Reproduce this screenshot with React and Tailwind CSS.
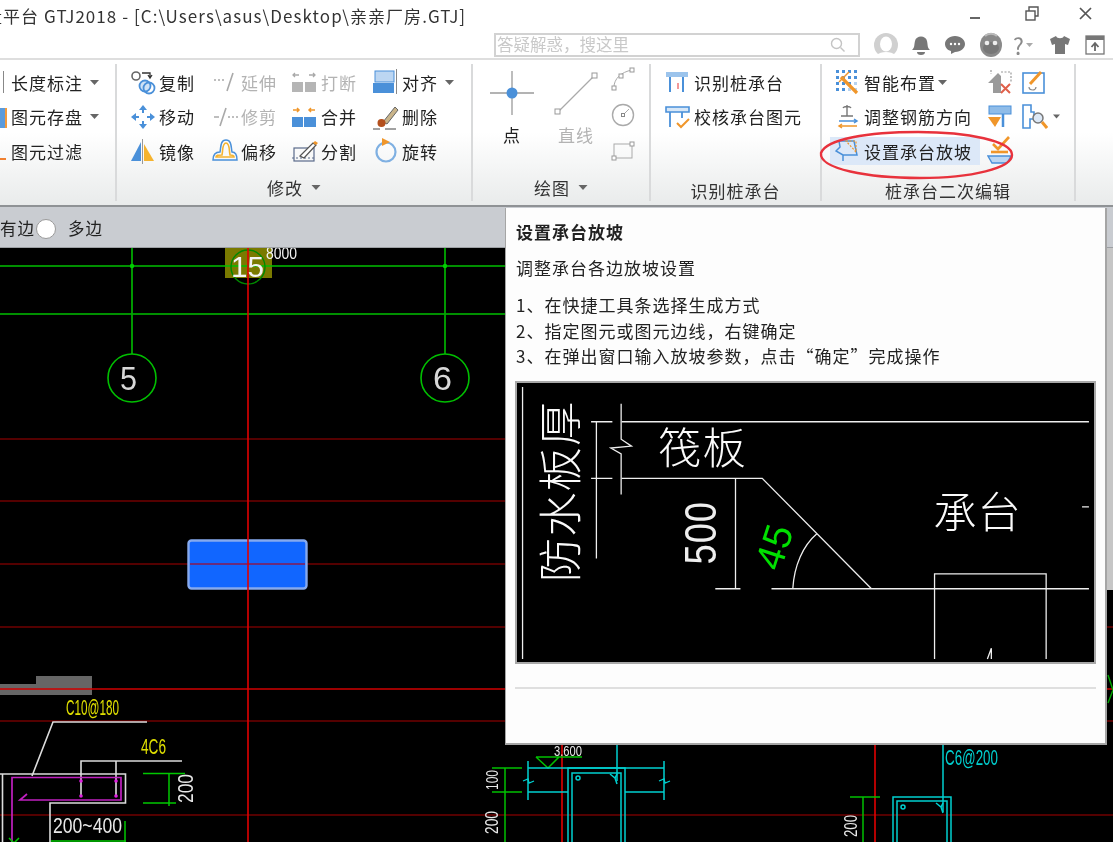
import { Fragment } from "react";

const BLUE = "#4a90d9";
const ORANGE = "#f0962a";
const GRAY = "#a9a9a9";

function Ico({ w = 26, h = 26, children, className = "" }) {
  return (
    <svg width={w} height={h} viewBox={`0 0 ${w} ${h}`} fill="none" className={`shrink-0 ${className}`}>
      {children}
    </svg>
  );
}

function Caret({ className = "" }) {
  return (
    <svg width="9" height="5" viewBox="0 0 9 5" className={`shrink-0 ${className}`}>
      <polygon points="0,0 9,0 4.5,5" fill="#666" />
    </svg>
  );
}

// ribbon icons
const IconCopy = () => (
  <Ico>
    <circle cx="6" cy="7" r="4" stroke="#666" strokeWidth="1.6" />
    <path d="M12 4h8v4M18 6l2 3 2-3" stroke="#333" strokeWidth="1.3" />
    <circle cx="15" cy="17" r="5.5" stroke={BLUE} strokeWidth="1.8" fill="#cfe2f6" />
    <circle cx="19" cy="19" r="5.5" stroke={BLUE} strokeWidth="1.8" />
  </Ico>
);
const IconMove = () => (
  <Ico>
    <g fill={BLUE}>
      <polygon points="13,1 17,6 9,6" />
      <polygon points="13,25 17,20 9,20" />
      <polygon points="1,13 6,9 6,17" />
      <polygon points="25,13 20,9 20,17" />
    </g>
    <path d="M13 6v3M13 17v3M6 13h3M17 13h3" stroke={BLUE} strokeWidth="2" />
  </Ico>
);
const IconMirror = () => (
  <Ico>
    <polygon points="11,4 11,23 1,23" fill={BLUE} />
    <polygon points="14,6 14,23 24,23" fill="#f5b32e" />
    <path d="M12.5 1v25" stroke="#999" strokeWidth="1" />
  </Ico>
);
const IconExtend = () => (
  <Ico>
    <path d="M2 11h2M6 11h2M10 11h2" stroke={GRAY} strokeWidth="1.5" />
    <path d="M21 4l-6 18" stroke={GRAY} strokeWidth="1.6" />
  </Ico>
);
const IconTrim = () => (
  <Ico>
    <path d="M2 13h5M16 13h2M20 13h2M24 13h2" stroke={GRAY} strokeWidth="1.5" />
    <path d="M14 4l-6 18" stroke={GRAY} strokeWidth="1.6" />
  </Ico>
);
const IconOffset = () => (
  <Ico>
    <path d="M1 22c0-6 3-8 7-8 1-4 0-12 6-12s5 8 6 12c3 0 5 3 5 8z" stroke={BLUE} strokeWidth="1.5" />
    <path d="M4 19c0-2 2-2 6-2 1-4 0-12 4-12s3 8 4 12c2 0 4 0 4 2z" stroke="#f5b32e" strokeWidth="1.6" />
  </Ico>
);
const IconBreak = () => (
  <Ico>
    <path d="M1 6h6M3 4l-2 2 2 2M17 6h6M21 4l2 2-2 2" stroke={GRAY} strokeWidth="1.3" />
    <rect x="0" y="13" width="11" height="10" fill="#b5b5b5" />
    <rect x="13" y="13" width="11" height="10" fill="#b5b5b5" />
  </Ico>
);
const IconMerge = () => (
  <Ico>
    <path d="M1 6h6M5 4l2 2-2 2M17 6h6M19 4l-2 2 2 2" stroke={ORANGE} strokeWidth="1.5" />
    <rect x="0" y="13" width="11" height="10" fill={BLUE} />
    <rect x="12" y="13" width="12" height="10" fill={BLUE} />
  </Ico>
);
const IconSplit = () => (
  <Ico>
    <rect x="2" y="10" width="20" height="13" stroke="#5a6a8a" strokeWidth="1.2" />
    <path d="M0 20h24" stroke="#5a6a8a" strokeWidth="1" strokeDasharray="2 2" />
    <path d="M8 18L21 5l3 2-12 13z" fill="#fff" stroke="#555" strokeWidth="1.2" />
    <path d="M21 5l2-2 3 2-2 2z" fill={ORANGE} />
  </Ico>
);
const IconAlign = () => (
  <Ico>
    <rect x="2" y="2" width="19" height="11" fill="#bcd6f2" stroke={BLUE} />
    <rect x="0" y="14" width="21" height="10" fill={BLUE} />
    <path d="M23.5 0v25" stroke="#888" strokeWidth="1" />
  </Ico>
);
const IconErase = () => (
  <Ico>
    <path d="M10 18L22 3l3 3-11 14z" fill="#c9b48a" stroke="#666" />
    <circle cx="8.5" cy="19" r="4" fill="#b4501e" />
    <path d="M0 25h7M12 25h11" stroke="#444" strokeWidth="1" />
  </Ico>
);
const IconRotate = () => (
  <Ico>
    <circle cx="13" cy="14" r="9.5" stroke="#7fb0e2" strokeWidth="2.2" />
    <polygon points="9,0 17,4 9,8" fill={ORANGE} />
  </Ico>
);

const IconIdentify = () => (
  <Ico>
    <rect x="1" y="3" width="22" height="5" fill="#9cc4ec" />
    <path d="M5 8v15M18 8v15" stroke={BLUE} strokeWidth="2" />
    <path d="M13 14v6" stroke="#e77" strokeWidth="1.5" />
  </Ico>
);
const IconCheckCap = () => (
  <Ico>
    <path d="M1 3h23v5H1z" stroke={BLUE} strokeWidth="1.6" fill="#d7e7f7" />
    <path d="M5 8v15M17 8v6" stroke={BLUE} strokeWidth="1.8" />
    <path d="M12 19l4 4 8-8" stroke={ORANGE} strokeWidth="2" />
  </Ico>
);
const IconSmart = () => (
  <Ico>
    <g fill={BLUE}>
      {[1, 7, 13, 19].flatMap((x) =>
        [1, 7, 13, 19].map((y) => <rect key={`${x}-${y}`} x={x} y={y} width="3" height="3" opacity={x + y > 30 ? 0.4 : 1} />)
      )}
    </g>
    <path d="M6 8l16 16" stroke={ORANGE} strokeWidth="3.2" />
    <path d="M4 13L14 3" stroke={ORANGE} strokeWidth="1.5" />
  </Ico>
);
const IconRebarDir = () => (
  <Ico>
    <path d="M12 1v11M8 4c1-2 7-2 8 0M6 12h12" stroke="#777" strokeWidth="1.4" />
    <path d="M4 17h18M19 15l3 2-3 2" stroke={BLUE} strokeWidth="1.5" />
    <path d="M22 22H4M7 20l-3 2 3 2" stroke={ORANGE} strokeWidth="1.5" />
  </Ico>
);
const IconSlope = () => (
  <Ico>
    <path d="M5 3h14l3 14H8v6M8 17L1 13l4-4-1-6" stroke={BLUE} strokeWidth="1.5" />
    <path d="M11 3h10v11z" stroke={ORANGE} strokeWidth="1.2" strokeDasharray="2 1.5" />
  </Ico>
);
const IconHouseX = () => (
  <Ico>
    <polygon points="1,14 11,4 14,7 14,24 6,24 6,14" fill="#9a9a9a" />
    <path d="M4 1v4M14 3h10v10" stroke="#999" strokeWidth="1.2" strokeDasharray="2 1.5" />
    <path d="M14 15l9 9M23 15l-9 9" stroke="#e0604a" strokeWidth="2" />
  </Ico>
);
const IconRoller = () => (
  <Ico>
    <rect x="2" y="2" width="22" height="8" fill="#8fbce8" stroke={BLUE} />
    <path d="M16 10v13" stroke={BLUE} strokeWidth="2.5" />
    <polygon points="1,13 14,13 8,23" fill={ORANGE} />
  </Ico>
);
const IconBoat = () => (
  <Ico h={30}>
    <path d="M6 8l5 5L22 1" stroke={ORANGE} strokeWidth="2.6" />
    <path d="M4 16h17" stroke={ORANGE} strokeWidth="2.6" />
    <path d="M1 20h23l-4 7H5z" fill="#bcd6f2" stroke={BLUE} strokeWidth="1.4" />
  </Ico>
);
const IconEditBox = () => (
  <Ico>
    <rect x="1" y="4" width="21" height="20" stroke={BLUE} strokeWidth="1.6" />
    <path d="M8 15L19 3" stroke={ORANGE} strokeWidth="3" />
    <path d="M7 18c0 3 3 3 4 3s3-1 3-3" stroke="#888" strokeWidth="1.2" />
  </Ico>
);
const IconFind = () => (
  <Ico>
    <path d="M1 1h8v7h3v7H8v9H1z" stroke={BLUE} strokeWidth="1.6" />
    <circle cx="16" cy="14" r="5" stroke="#777" strokeWidth="1.5" fill="#dce8f6" />
    <path d="M20 18l5 6" stroke={ORANGE} strokeWidth="3" />
  </Ico>
);

function RibbonItem({ icon, text, gray, caret, caretGap = "ml-[7px]", className = "" }) {
  return (
    <div className={`flex items-center h-full ${className}`}>
      <div className="w-[29px] shrink-0 flex">{icon}</div>
      <span className={`whitespace-nowrap ${gray ? "text-[#b3b3b3]" : "text-[#222]"}`}>{text}</span>
      {caret && <Caret className={caretGap} />}
    </div>
  );
}

function Group({ width, label, caret, labelPad = "pt-[8px]", children }) {
  return (
    <div className={`flex flex-col shrink-0 border-r-2 border-[#d9dadb] my-[4px] ${width}`}>
      <div className="h-[105px] -mt-[4px] pt-[5px]">{children}</div>
      <div className={`flex-1 flex items-center justify-center gap-[8px] text-[#333] ${labelPad}`}>
        <span>{label}</span>
        {caret && <Caret className="w-[10px]" />}
      </div>
    </div>
  );
}

function TitleBar() {
  return (
    <div className="h-[60px] relative bg-white border-b-2 border-[#dedede] shrink-0">
      <div className="h-[32px] flex items-center overflow-hidden">
        <span className="-ml-[15px] whitespace-nowrap text-[17px] tracking-[1.05px] text-[#333]">
          量平台 GTJ2018 - [C:\Users\asus\Desktop\亲亲厂房.GTJ]
        </span>
        <div className="ml-auto flex items-center pr-[21px] text-[#555]">
          <div className="w-[10px] h-[2px] bg-[#666] mt-[3px]" />
          <svg width="14" height="15" viewBox="0 0 14 15" fill="none" className="ml-[45px] -mt-[6px]" stroke="#555" strokeWidth="1.4">
            <rect x="1" y="5" width="9" height="9" />
            <path d="M4 5V1h9v9h-3" />
          </svg>
          <svg width="13" height="13" viewBox="0 0 13 13" className="ml-[40px] -mt-[6px]" stroke="#555" strokeWidth="1.7">
            <path d="M1 1l11 11M12 1L1 12" />
          </svg>
        </div>
      </div>
      <div className="flex items-center h-[25px] pl-[494px]">
        <div className="w-[366px] h-[24px] border-2 border-[#d2d2d2] bg-white flex items-center justify-between pl-[1px] pr-[12px]">
          <span className="text-[16.5px] text-[#c9c9c9]">答疑解惑，搜这里</span>
          <svg width="16" height="16" viewBox="0 0 16 16" fill="none" stroke="#c4c4c4" strokeWidth="1.4">
            <circle cx="6.5" cy="6.5" r="5" />
            <path d="M10.5 10.5l4 4" />
          </svg>
        </div>
        <div className="flex items-center ml-[14px] mt-[1px]">
          <svg width="24" height="26" viewBox="0 0 24 26" className="mr-[13px]">
            <circle cx="12" cy="13" r="12" fill="#d0d0d0" />
            <ellipse cx="12" cy="12" rx="6" ry="7.5" fill="#fff" />
            <path d="M3 23c3-4 15-4 18 0l-4 3H7z" fill="#fff" />
          </svg>
          <svg width="20" height="22" viewBox="0 0 20 22" fill="#777" className="mr-[13px]">
            <path d="M1 16c3-3 2-5 3-9 1-6 11-6 12 0 1 4 0 6 3 9z" />
            <path d="M6 18h8a4 3 0 0 1-8 0z" />
          </svg>
          <svg width="22" height="20" viewBox="0 0 22 20" className="mr-[13px]">
            <path d="M11 1c6 0 10 4 10 8s-4 8-10 8l-4 2 0-3C3 15 1 12 1 9c0-4 4-8 10-8z" fill="#777" />
            <circle cx="7" cy="9" r="1.2" fill="#fff" />
            <circle cx="11" cy="9" r="1.2" fill="#fff" />
            <circle cx="15" cy="9" r="1.2" fill="#fff" />
          </svg>
          <svg width="24" height="26" viewBox="0 0 24 26" className="mr-[10px]">
            <ellipse cx="12" cy="13" rx="11" ry="12" fill="#8a8a8a" />
            <ellipse cx="12" cy="16" rx="8" ry="6" fill="#777" />
            <circle cx="8" cy="11" r="2.3" fill="#eee" />
            <circle cx="16" cy="11" r="2.3" fill="#eee" />
            <path d="M6 4c3-3 9-3 12 0" stroke="#bbb" strokeWidth="2" fill="none" />
          </svg>
          <span className="text-[23px] leading-none text-[#8a8a8a]">?</span>
          <svg width="7" height="4" viewBox="0 0 7 4" className="ml-[2px] mr-[16px]">
            <polygon points="0,0 7,0 3.5,4" fill="#aaa" />
          </svg>
          <svg width="22" height="20" viewBox="0 0 22 20" className="mr-[14px]" fill="#777">
            <path d="M7 1L1 4l2 6 3-1v10h10V9l3 1 2-6-6-3c-1 3-7 3-8 0z" />
          </svg>
          <svg width="20" height="20" viewBox="0 0 20 20" fill="none">
            <rect x="1" y="1" width="18" height="18" stroke="#777" strokeWidth="1.3" />
            <rect x="1" y="1" width="18" height="4" fill="#777" />
            <path d="M10 16V9M6.5 12L10 8l3.5 4" stroke="#666" strokeWidth="1.8" />
          </svg>
        </div>
      </div>
    </div>
  );
}

function Ribbon() {
  return (
    <div className="h-[147px] shrink-0 flex bg-gradient-to-b from-white via-white to-[#e9ebeb] border-b-2 border-[#8f9295] text-[17px] tracking-[1px] leading-none">
      <Group width="w-[117px]">
        <div className="grid auto-rows-[34.5px] pl-[11px]">
          <div className="flex items-center h-full relative">
            <div className="absolute -left-[8px] top-[6px] w-px h-[22px] bg-[#888]" />
            <span className="text-[#222] whitespace-nowrap">长度标注</span>
            <Caret className="ml-[7px]" />
          </div>
          <div className="flex items-center h-full relative">
            <div className="absolute -left-[11px] top-[8px] w-[7px] h-[20px] bg-[#5b9bdc] border-r-2 border-[#f39a3c]" />
            <span className="text-[#222] whitespace-nowrap">图元存盘</span>
            <Caret className="ml-[7px]" />
          </div>
          <div className="flex items-center h-full relative">
            <div className="absolute -left-[11px] top-[14px] w-[6px] h-[12px] border-b-2 border-[#f08030]" />
            <span className="text-[#222] whitespace-nowrap">图元过滤</span>
          </div>
        </div>
      </Group>

      <Group width="w-[356px]" label="修改" caret>
        <div className="grid grid-cols-[82px_80px_81px_auto] auto-rows-[34.5px] pl-[13px]">
          <RibbonItem icon={<IconCopy />} text="复制" />
          <RibbonItem icon={<IconExtend />} text="延伸" gray />
          <RibbonItem icon={<IconBreak />} text="打断" gray />
          <RibbonItem icon={<IconAlign />} text="对齐" caret />
          <RibbonItem icon={<IconMove />} text="移动" />
          <RibbonItem icon={<IconTrim />} text="修剪" gray />
          <RibbonItem icon={<IconMerge />} text="合并" />
          <RibbonItem icon={<IconErase />} text="删除" />
          <RibbonItem icon={<IconMirror />} text="镜像" />
          <RibbonItem icon={<IconOffset />} text="偏移" />
          <RibbonItem icon={<IconSplit />} text="分割" />
          <RibbonItem icon={<IconRotate />} text="旋转" />
        </div>
      </Group>

      <Group width="w-[178px]" label="绘图" caret>
        <div className="flex pl-[10px] -mt-[5px]">
          <div className="w-[58px] flex flex-col items-center pt-[10px]">
            <svg width="46" height="46" viewBox="0 0 46 46">
              <path d="M23 1v44M1 23h44" stroke="#9a9a9a" strokeWidth="1.3" />
              <circle cx="23" cy="23" r="5.5" fill={BLUE} />
            </svg>
            <span className="mt-[10px] text-[#222]">点</span>
          </div>
          <div className="w-[70px] flex flex-col items-center pt-[10px]">
            <svg width="46" height="46" viewBox="0 0 46 46" fill="#fff">
              <path d="M5 42L41 6" stroke="#aaa" strokeWidth="1.2" />
              <rect x="2" y="39" width="5" height="5" stroke="#999" />
              <rect x="39" y="3" width="5" height="5" stroke="#999" />
            </svg>
            <span className="mt-[10px] text-[#b3b3b3]">直线</span>
          </div>
          <div className="w-[24px] grid auto-rows-[36px] place-items-center pt-[1px]">
            <svg width="24" height="24" viewBox="0 0 24 24" fill="#fff">
              <path d="M3 20C3 12 10 5 21 3" stroke="#aaa" fill="none" />
              <rect x="1" y="19" width="4" height="4" stroke="#999" />
              <rect x="8" y="7" width="4" height="4" stroke="#999" />
              <rect x="19" y="1" width="4" height="4" stroke="#999" />
            </svg>
            <svg width="24" height="24" viewBox="0 0 24 24" fill="none">
              <circle cx="12" cy="12" r="10.5" stroke="#aaa" strokeWidth="1.4" />
              <rect x="10.5" y="10.5" width="3" height="3" stroke="#888" />
              <path d="M14 10l4-4" stroke="#aaa" />
            </svg>
            <svg width="24" height="22" viewBox="0 0 24 22" fill="#fff">
              <rect x="3" y="4" width="18" height="14" stroke="#aaa" fill="none" />
              <rect x="1" y="16" width="4" height="4" stroke="#999" />
              <rect x="19" y="2" width="4" height="4" stroke="#999" />
            </svg>
          </div>
        </div>
      </Group>

      <Group width="w-[171px]" label="识别桩承台" labelPad="pt-[14px]">
        <div className="grid auto-rows-[34.5px] pl-[14px]">
          <RibbonItem icon={<IconIdentify />} text="识别桩承台" />
          <RibbonItem icon={<IconCheckCap />} text="校核承台图元" />
        </div>
      </Group>

      <Group width="w-[254px]" label="桩承台二次编辑" labelPad="pt-[14px]">
        <div className="grid grid-cols-[157px_35px_auto] auto-rows-[34.5px] pl-[8px] items-center">
          <RibbonItem icon={<IconSmart />} text="智能布置" caret caretGap="ml-[2px]" className="pl-[5px]" />
          <IconHouseX />
          <IconEditBox />
          <RibbonItem icon={<IconRebarDir />} text="调整钢筋方向" className="pl-[5px]" />
          <IconRoller />
          <div className="flex items-center gap-[5px]">
            <IconFind />
            <Caret className="w-[7px]" />
          </div>
          <div className="w-[150px] h-[28px] bg-[#dce8f8]">
            <RibbonItem icon={<IconSlope />} text="设置承台放坡" className="pl-[5px]" />
          </div>
          <IconBoat />
        </div>
      </Group>
    </div>
  );
}

function OptionBar() {
  return (
    <div className="h-[41px] shrink-0 bg-[#c9ccd1] border-b border-[#9da0a4] pt-[3px] flex items-center text-[16.5px] tracking-[1px] text-[#222]">
      <span>有边</span>
      <span className="w-[20px] h-[20px] rounded-full bg-white border border-[#9a9a9a] ml-[1px]" />
      <span className="ml-[12px]">多边</span>
    </div>
  );
}

function CadText({ x, y, size, len, fill = "#e8e8e8", rotate, children }) {
  const mono = { fontFamily: "Liberation Sans", fontSize: size, fill, textLength: len, lengthAdjust: "spacingAndGlyphs" };
  if (rotate) {
    return (
      <text transform={`translate(${x} ${y}) rotate(${rotate})`} {...mono}>
        {children}
      </text>
    );
  }
  return (
    <text x={x} y={y} {...mono}>
      {children}
    </text>
  );
}

function ColumnSection({ x1, x2, top, innerTop, hookX, dotY }) {
  return (
    <g stroke="#00d0d0" strokeWidth="1.5" fill="none">
      <path d={`M${x1} 842V${top}H${x2}V842`} />
      <path d={`M${x1 + 4} 842V${innerTop}H${x2 - 4}V842`} />
      <circle cx={x1 + 10} cy={dotY} r="2" />
      <path d={`M${hookX - 5} ${dotY - 4}l5 4 2-4M${hookX} ${dotY}l2 6`} />
    </g>
  );
}

function CadCanvas() {
  return (
    <svg viewBox="0 248 1113 594" className="block w-[1113px] h-[594px] bg-black">
      {[439, 501, 564, 627, 721, 815].map((y) => (
        <path key={y} d={`M0 ${y}H1113`} stroke="#a80000" strokeWidth="1.2" />
      ))}
      <rect x="0" y="684" width="36" height="11" fill="#666" />
      <rect x="36" y="676" width="56" height="19" fill="#666" />
      <path d="M0 689H1113" stroke="#d00000" strokeWidth="1.4" />
      <path d="M1108 675L1113 690L1108 703" stroke="#00a800" strokeWidth="1.4" fill="none" />

      <rect x="225" y="248" width="47" height="30" fill="#7a7a00" />
      <path d="M0 266H1113M0 314H1113" stroke="#00c000" strokeWidth="1.6" />
      <path d="M132 248V354M445 248V354" stroke="#00a800" strokeWidth="1.8" />
      <circle cx="132" cy="266" r="2.2" fill="#00d000" />
      <circle cx="445" cy="266" r="2.2" fill="#00d000" />
      <circle cx="132" cy="378" r="24" stroke="#00c000" strokeWidth="1.6" fill="none" />
      <circle cx="445" cy="378" r="24" stroke="#00c000" strokeWidth="1.6" fill="none" />
      <circle cx="248" cy="267" r="17" stroke="#008800" strokeWidth="1.4" fill="none" />

      <rect x="188.5" y="540.5" width="118" height="48" rx="3" fill="#1166ff" stroke="#85a9ee" strokeWidth="2.4" />
      <path d="M190 564H305" stroke="#8a1a50" strokeWidth="1.4" />
      <path d="M248 248V842M562 745V842M875 745V842" stroke="#e00000" strokeWidth="1.6" />

      <CadText x={120} y={390} size={33} len={17} fill="#d8d8d8">5</CadText>
      <CadText x={433} y={390} size={33} len={19} fill="#d8d8d8">6</CadText>
      <CadText x={231} y={277} size={30} len={33} fill="#f4f4f4">15</CadText>
      <CadText x={266} y={259} size={17} len={31} fill="#f4f4f4">8000</CadText>

      <CadText x={66} y={715} size={22} len={53} fill="#e0e000">C10@180</CadText>
      <CadText x={141} y={754} size={22} len={25} fill="#e0e000">4C6</CadText>
      <path d="M32 776L53 722H147M81 796V761H182M116 796V761M0 774H125.5V803H50V842M2.5 774V842" stroke="#dcdcdc" strokeWidth="1.6" fill="none" />
      <path d="M12 842V777.5H121V800H20l7-6" stroke="#c020c0" strokeWidth="1.7" fill="none" />
      <g fill="#e020e0">
        <circle cx="81" cy="781" r="1.8" />
        <circle cx="116" cy="781" r="1.8" />
        <circle cx="81" cy="796" r="1.8" />
        <circle cx="116" cy="796" r="1.8" />
      </g>
      <path d="M143 773.5H185M143 803H176M169 773V806M51 841H126M125 821V842M9 838l5 5 5-5" stroke="#00c800" strokeWidth="1.5" fill="none" />
      <CadText x={193} y={803} size={22} len={29} rotate={-90}>200</CadText>
      <CadText x={53} y={833} size={22} len={69}>200~400</CadText>

      <CadText x={554} y={756} size={15} len={28}>3.600</CadText>
      <path d="M536 757H582M536 757l12 11 11-11" stroke="#00c000" strokeWidth="1.5" fill="none" />
      <path d="M492 768H522M492 792H522M505 768V842M850 797H880M863 797V842" stroke="#00c000" strokeWidth="1.5" fill="none" />
      <CadText x={498} y={790} size={16} len={20} rotate={-90}>100</CadText>
      <CadText x={498} y={834} size={18} len={23} rotate={-90}>200</CadText>
      <CadText x={857} y={837} size={18} len={22} rotate={-90}>200</CadText>
      <path d="M617 745V781M943 745V812M528 761V800M664 761V800M528 768H664M528 792H568M625 792H664" stroke="#00d0d0" strokeWidth="1.5" fill="none" />
      <path d="M523 781l5-2 1 4 5-2M659 781l5-2 1 4 5-2" stroke="#00d0d0" strokeWidth="1.3" fill="none" />
      <ColumnSection x1={568} x2={625} top={768} innerTop={773} hookX={615} dotY={778} />
      <ColumnSection x1={893} x2={951} top={797} innerTop={801} hookX={941} dotY={807} />
      <CadText x={945} y={765} size={22} len={53} fill="#00d0d0">C6@200</CadText>
    </svg>
  );
}

function SlopeFigure() {
  const cjk = { fontFamily: "Noto Sans CJK SC", fill: "#fafafa", fontWeight: 300 };
  return (
    <svg viewBox="515 380 581 283" className="block -ml-[1px] w-[581px] h-[283px] bg-black border-2 border-[#a8a8a8]">
      <g stroke="#eee" strokeWidth="1.3" fill="none">
        <path d="M518.5 384V660" />
        <path d="M619 419.3H1093M619 476.7H761.6L872.4 588.7M771 588.7H1093" />
        <path d="M618.5 401V437L629 444L608 446L618.5 452V493" />
        <path d="M593.4 419V558M588 419.3H609.6M588 476.7H609.6" />
        <path d="M734.5 477V588.7M714 588.7H739.5" />
        <path d="M817 533C803 545 794 565 792.6 588.7" />
        <path d="M936.4 660V573.7H1049.6V660" />
        <path d="M990 660L994 649V660M1086 505.7H1093" />
      </g>
      <text transform="translate(574 582) rotate(-90)" fontSize="45" {...cjk}>防水板厚</text>
      <text x="656" y="462" fontSize="44" {...cjk}>筏板</text>
      <text x="935" y="527" fontSize="44" {...cjk}>承台</text>
      <text transform="translate(715 564) rotate(-90)" fontFamily="Liberation Sans" fontSize="45" fill="#eee" textLength="64" lengthAdjust="spacingAndGlyphs">500</text>
      <text transform="translate(780 572) rotate(-72)" fontFamily="Liberation Sans" fontSize="40" fill="#00e000" textLength="46" lengthAdjust="spacingAndGlyphs">45</text>
    </svg>
  );
}

function Tooltip() {
  const lines = [
    "1、在快捷工具条选择生成方式",
    "2、指定图元或图元边线，右键确定",
    "3、在弹出窗口输入放坡参数，点击“确定”完成操作",
  ];
  return (
    <div className="absolute left-[505px] top-[208px] w-[602px] h-[537px] bg-[#fdfdfd] border-r-2 border-b-2 border-l border-[#a5a5a5] pl-[10px] text-[17px] tracking-[1px] leading-none text-[#222]">
      <div className="font-bold h-[24px] flex items-center mt-[11px]">设置承台放坡</div>
      <div className="h-[24px] flex items-center mt-[12px]">调整承台各边放坡设置</div>
      <div className="mt-[13px] mb-[12px]">
        {lines.map((t) => (
          <Fragment key={t}>
            <div className="h-[25.5px] flex items-center">{t}</div>
          </Fragment>
        ))}
      </div>
      <SlopeFigure />
      <div className="-ml-[1px] w-[581px] h-[2px] bg-[#dfdfdf] mt-[23px]" />
    </div>
  );
}

export default function App() {
  return (
    <div className="relative w-[1113px] h-[842px] overflow-hidden flex flex-col bg-black font-['Noto_Sans_CJK_SC','Liberation_Sans',sans-serif] blur-[0.5px]">
      <TitleBar />
      <Ribbon />
      <OptionBar />
      <CadCanvas />
      <div className="absolute left-[1107px] top-[248px] w-[6px] h-[342px] bg-[#c6c6c6]" />
      <Tooltip />
      {/* hand-drawn mark around the active command */}
      <svg width="200" height="52" viewBox="0 0 200 52" fill="none" className="absolute left-[818px] top-[129px]">
        <path d="M3 24C8 10 50 3 100 3c50 0 94 9 94 23 0 13-40 23-92 23C50 49 1 40 3 24z" stroke="#e8323c" strokeWidth="2.4" />
      </svg>
    </div>
  );
}
